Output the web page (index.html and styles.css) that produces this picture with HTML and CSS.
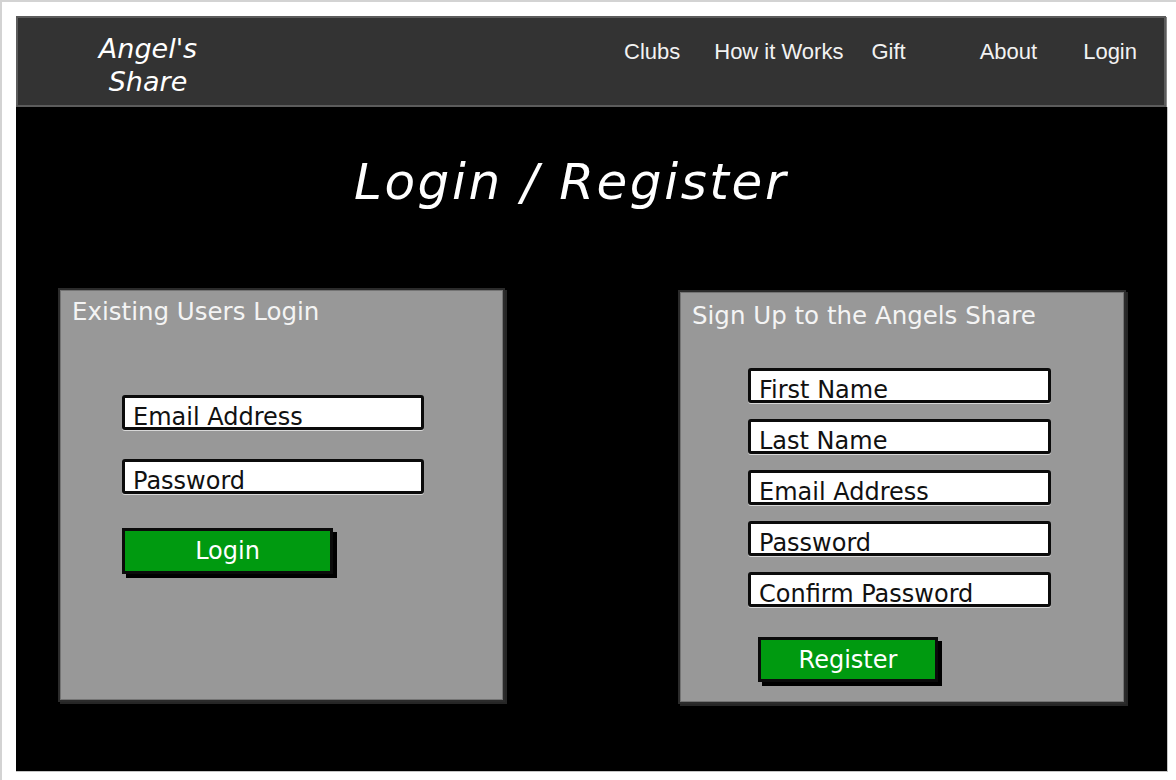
FILE: index.html
```html
<!DOCTYPE html>
<html lang="en">
<head>
<meta charset="utf-8">
<title>Angel's Share - Login / Register</title>
<link rel="stylesheet" href="styles.css">
</head>
<body>
<div class="frame">
  <div class="mock">
    <header class="topbar">
      <div class="logo">Angel's<br>Share</div>
      <nav class="nav">
        <a class="nav-item">Clubs</a>
        <a class="nav-item">How it Works</a>
        <a class="nav-item">Gift</a>
        <a class="nav-item">About</a>
        <a class="nav-item">Login</a>
      </nav>
    </header>
    <main class="stage">
      <h1 class="title">Login / Register</h1>
      <div class="panels">
        <section class="panel panel-login">
          <h2 class="panel-title">Existing Users Login</h2>
          <div class="fields fields-login">
            <div class="field">Email Address</div>
            <div class="field">Password</div>
          </div>
          <div class="btn btn-login">Login</div>
        </section>
        <section class="panel panel-register">
          <h2 class="panel-title">Sign Up to the Angels Share</h2>
          <div class="fields fields-register">
            <div class="field">First Name</div>
            <div class="field">Last Name</div>
            <div class="field">Email Address</div>
            <div class="field">Password</div>
            <div class="field">Confirm Password</div>
          </div>
          <div class="btn btn-register">Register</div>
        </section>
      </div>
    </main>
  </div>
</div>
</body>
</html>
```

FILE: styles.css
```css
* { box-sizing: border-box; }

html, body {
  margin: 0;
  padding: 0;
  background: #ffffff;
}

body {
  font-family: "DejaVu Sans", "Noto Sans", sans-serif;
}

.frame {
  width: 1176px;
  height: 780px;
  border-top: 2px solid #d3d3d3;
  border-left: 2px solid #d3d3d3;
  padding: 14px 0 0 14px;
  background: #ffffff;
}

.mock {
  width: 1152px;
}

/* ---------- header ---------- */
.topbar {
  width: 1150px;
  height: 91px;
  background: #333333;
  border: 2px solid #5c5c5c;
  box-shadow: 1px 1px 0 #8a8a8a;
  display: flex;
  align-items: flex-start;
}

.logo {
  width: 120px;
  margin-left: 70px;
  padding-top: 14px;
  font-family: "DejaVu Sans", sans-serif;
  font-style: italic;
  font-size: 27px;
  line-height: 33px;
  color: #ffffff;
  text-align: center;
}

.nav {
  margin-left: auto;
  padding-right: 27px;
  padding-top: 21px;
  display: flex;
}

.nav-item {
  font-family: "Liberation Sans", Arial, sans-serif;
  font-size: 22px;
  color: #f2f2f2;
  text-decoration: none;
}

.nav-item:nth-child(2) { margin-left: 34px; }
.nav-item:nth-child(3) { margin-left: 28px; }
.nav-item:nth-child(4) { margin-left: 74px; }
.nav-item:nth-child(5) { margin-left: 46px; }

/* ---------- stage ---------- */
.stage {
  width: 1152px;
  height: 665px;
  background: #000000;
  border-right: 1px solid #c4c4c4;
  border-bottom: 1px solid #c4c4c4;
  padding-top: 45px;
}

.title {
  margin: 0;
  padding-right: 41px;
  text-align: center;
  font-family: "DejaVu Sans", sans-serif;
  font-style: italic;
  font-weight: normal;
  font-size: 50px;
  line-height: 60px;
  letter-spacing: 2.6px;
  color: #ffffff;
}

.panels {
  margin-top: 78px;
  padding: 0 43px 0 44px;
  display: flex;
  justify-content: space-between;
  align-items: flex-start;
}

.panel {
  background: #989898;
  border: 1px solid #747474;
  box-shadow: 0 0 0 2px #2b2b2b, 2px 2px 0 2px #262626;
  padding: 6px 11px 0 11px;
}

.panel-login {
  width: 443px;
  height: 410px;
}

.panel-register {
  width: 444px;
  height: 410px;
  margin-top: 2px;
  padding-top: 8px;
}

.panel-title {
  margin: 0;
  font-family: "DejaVu Sans", sans-serif;
  font-weight: normal;
  font-size: 24.5px;
  line-height: 30px;
  color: #f4f4f4;
}

.fields {
  display: flex;
  flex-direction: column;
}

.fields-login {
  margin: 68px 0 0 50px;
  gap: 29px;
}

.fields-register {
  margin: 37px 0 0 56px;
  gap: 16px;
}

.field {
  height: 35px;
  background: #ffffff;
  border: 3px solid #0b0b0b;
  border-radius: 3px;
  box-shadow: 0 1px 0 #d8d8d8;
  padding: 7px 0 0 8px;
  font-size: 24px;
  line-height: 24px;
  color: #111111;
  white-space: nowrap;
}

.fields-login .field { width: 302px; }
.fields-register .field { width: 303px; }

.btn {
  display: flex;
  align-items: center;
  justify-content: center;
  background: #009a10;
  border: 3px solid #0b0b0b;
  box-shadow: 4px 4px 0 #000000;
  color: #ffffff;
  font-size: 24px;
  line-height: 28px;
}

.btn-login {
  width: 211px;
  height: 46px;
  margin: 34px 0 0 50px;
}

.btn-register {
  width: 180px;
  height: 45px;
  margin: 30px 0 0 66px;
}
```
